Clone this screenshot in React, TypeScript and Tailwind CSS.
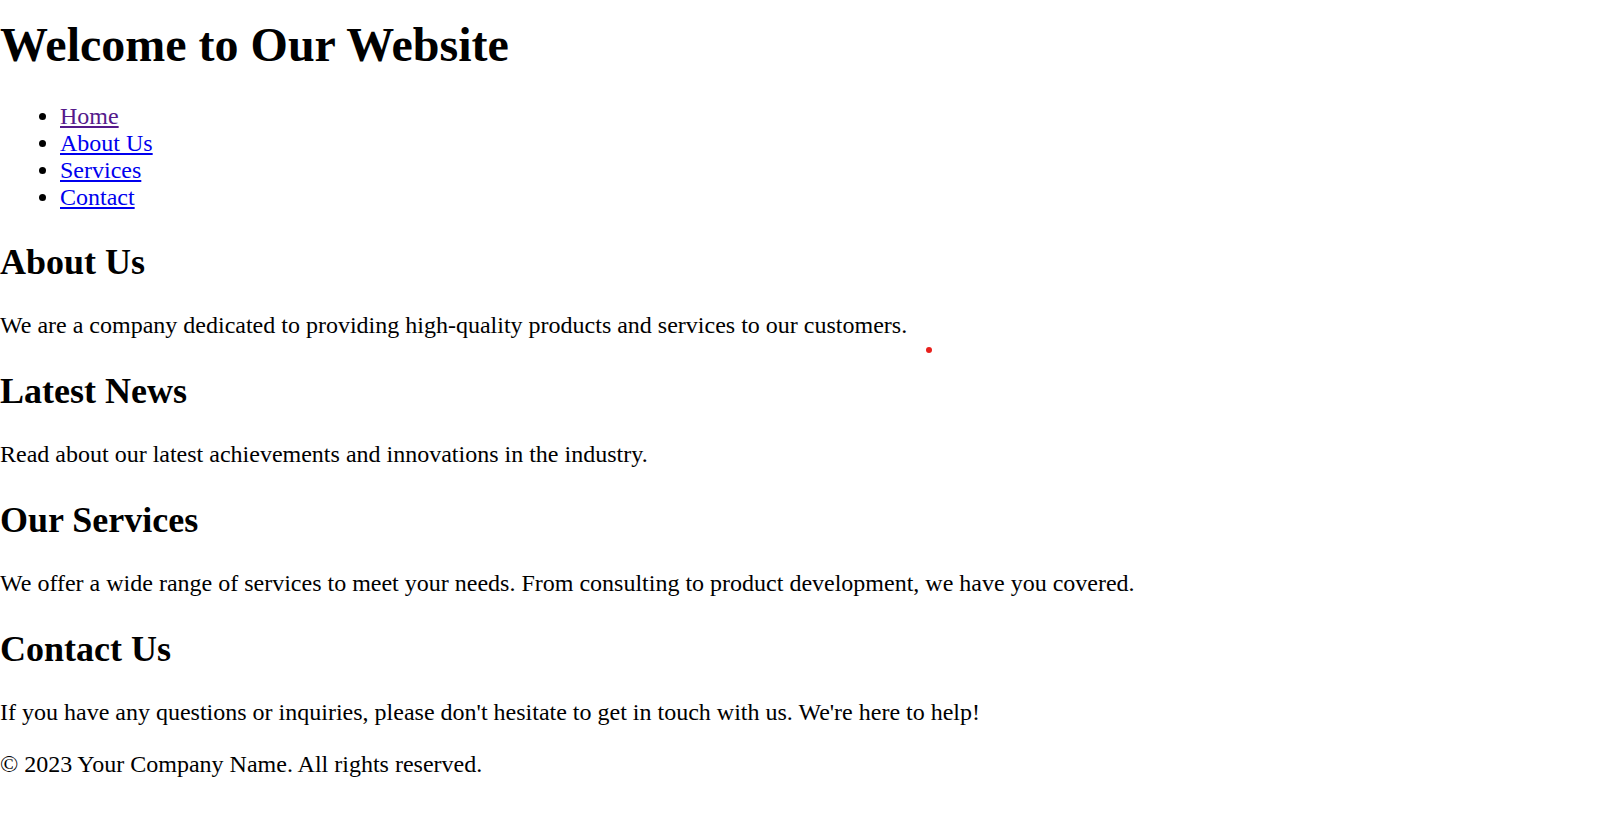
export default function App() {
  return (
    <div className="relative min-h-screen bg-white pt-[17px] text-black font-['Liberation_Serif',_'Times_New_Roman',_serif] text-[24px] leading-[normal]">
      <header>
        <h1 className="mb-[30px] text-[48px] font-bold leading-[normal]">Welcome to Our Website</h1>
        <nav>
          <ul className="mt-[31px] mb-[29px] pl-[60px] list-disc">
            <li>
              <a href="#home" className="text-[#551a8b] underline">Home</a>
            </li>
            <li>
              <a href="#about" className="text-[#0000ee] underline">About Us</a>
            </li>
            <li>
              <a href="#services" className="text-[#0000ee] underline">Services</a>
            </li>
            <li>
              <a href="#contact" className="text-[#0000ee] underline">Contact</a>
            </li>
          </ul>
        </nav>
      </header>

      <main>
        <section id="about">
          <h2 className="mt-[30px] mb-[29px] text-[36px] font-bold leading-[normal]">About Us</h2>
          <p className="my-[24px]">We are a company dedicated to providing high-quality products and services to our customers.</p>
        </section>

        <section>
          <h2 className="mt-[31px] mb-[29px] text-[36px] font-bold leading-[normal]">Latest News</h2>
          <p className="my-[24px]">Read about our latest achievements and innovations in the industry.</p>
        </section>

        <section id="services">
          <h2 className="mt-[31px] mb-[29px] text-[36px] font-bold leading-[normal]">Our Services</h2>
          <p className="my-[24px]">We offer a wide range of services to meet your needs. From consulting to product development, we have you covered.</p>
        </section>

        <section id="contact">
          <h2 className="mt-[31px] mb-[29px] text-[36px] font-bold leading-[normal]">Contact Us</h2>
          <p className="my-[24px]">If you have any questions or inquiries, please don't hesitate to get in touch with us. We're here to help!</p>
        </section>
      </main>

      <footer>
        <p className="my-[25px]">© 2023 Your Company Name. All rights reserved.</p>
      </footer>

      {/* stray cursor dot */}
      <span className="absolute left-[926px] top-[347px] h-[6px] w-[6px] rounded-full bg-[#e8201c]" />
    </div>
  );
}
